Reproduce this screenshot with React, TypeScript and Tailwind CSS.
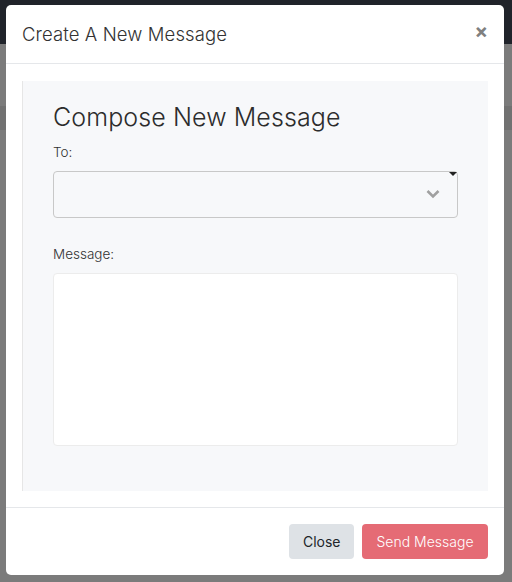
import React from "react";

export default function App() {
  return (
    <div className="relative w-[512px] h-[582px] overflow-hidden bg-[#7b7b7b] font-['Inter',sans-serif]">
      {/* Dimmed page behind the modal */}
      <div className="h-[44px] bg-[#20232a]" />
      <div className="h-[62px]" />
      <div className="h-[24px] bg-[#717171]" />

      {/* Modal */}
      <div className="absolute left-[6px] top-[5px] w-[498px] h-[570px] bg-white rounded-[5px] flex flex-col">
        {/* Header */}
        <div className="h-[59px] flex items-center justify-between pl-[16px] pr-[16px] border-b border-[#e5e7ea]">
          <h5 className="text-[18.5px] font-light text-[#333] tracking-[0.1px] pt-[2px]">
            Create A New Message
          </h5>
          <span className="text-[#808080] text-[20px] font-bold leading-none -mt-[6px]">
            ×
          </span>
        </div>

        {/* Body */}
        <div className="px-[16px] pt-[17px] pb-[16px]">
          <div className="bg-[#f7f8fa] border-l border-[#e6e6e6] h-[410px] pl-[30px] pr-[30px] pt-[20px]">
            <h2 className="text-[25px] font-light text-[#2c2c2c] leading-[32px] tracking-[0.1px]">
              Compose New Message
            </h2>
            <label className="block text-[13.5px] font-light text-[#333] mt-[9px]">
              To:
            </label>
            <div className="relative mt-[9px] h-[47px] bg-[#f7f8fa] border border-[#c8c8c8] rounded-[4px]">
              <svg
                className="absolute right-[17px] top-[17px]"
                width="14"
                height="10"
                viewBox="0 0 14 10"
              >
                <path
                  d="M1.5 2 L7 7.5 L12.5 2"
                  fill="none"
                  stroke="#a0a0a0"
                  strokeWidth="2.6"
                />
              </svg>
              <svg
                className="absolute right-0 top-0"
                width="8"
                height="5"
                viewBox="0 0 8 5"
              >
                <path d="M0 0 L8 0 L4 4 Z" fill="#222" />
              </svg>
            </div>
            <label className="block text-[13.5px] font-light text-[#333] mt-[26px]">
              Message:
            </label>
            <div className="mt-[8px] h-[173px] bg-white border border-[#ececec] rounded-[4px]" />
          </div>
        </div>

        {/* Footer */}
        <div className="border-t border-[#e5e7ea] flex justify-end gap-[8px] pr-[16px] pt-[16px]">
          <button className="h-[35px] px-[13.5px] rounded-[4px] bg-[#dee2e6] text-[#212529] text-[14px]">
            Close
          </button>
          <button className="h-[35px] px-[14.5px] rounded-[4px] bg-[#e56b75] text-white text-[14px] font-light">
            Send Message
          </button>
        </div>
      </div>
    </div>
  );
}
